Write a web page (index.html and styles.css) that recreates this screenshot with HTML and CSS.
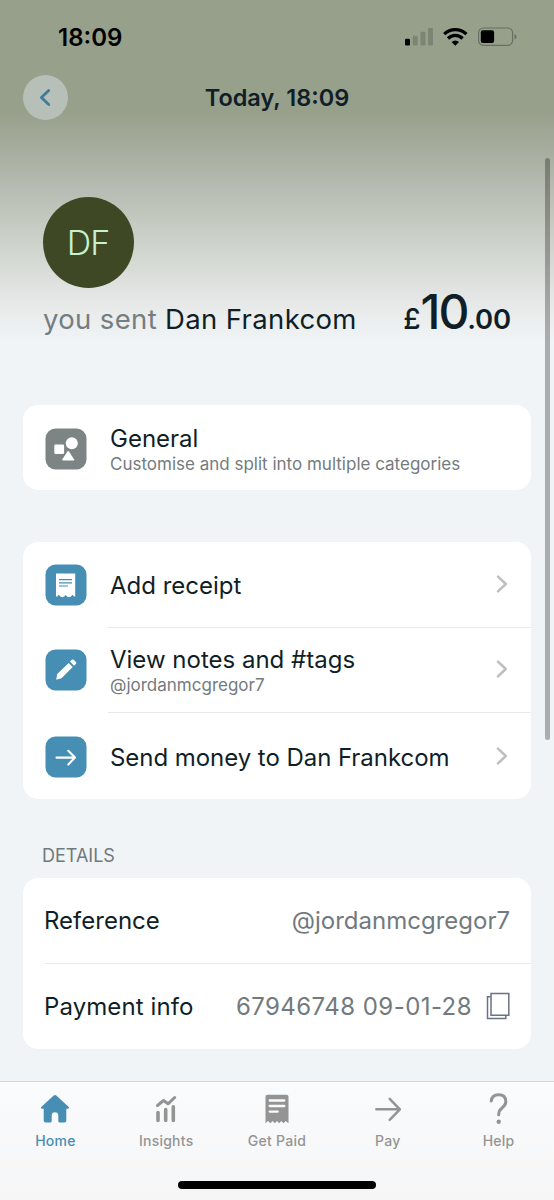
FILE: index.html
```html
<!DOCTYPE html>
<html lang="en">
<head>
<meta charset="utf-8">
<title>Transaction</title>
<link rel="stylesheet" href="styles.css">
</head>
<body>
<div class="screen">
  <header class="top">
    <div class="status">
      <span class="clock">18:09</span>
      <svg class="status-icons" width="114" height="20" viewBox="404 27 114 20">
        <rect x="405" y="38.700" width="5" height="6.800" rx="1.300" fill="#000"/>
        <g fill="#7c8473"><rect x="412.700" y="35.700" width="5" height="9.800" rx="1.300"/><rect x="420.500" y="31.800" width="5" height="13.700" rx="1.300"/><rect x="428" y="28" width="5" height="17.500" rx="1.300"/></g>
        <g fill="none" stroke="#000" stroke-width="3.200"><path d="M444.200 34.200a15.800 15.800 0 0 1 22.200 0"/><path d="M448 38.500a10.300 10.300 0 0 1 14.600 0"/></g>
        <path d="M451.600 42a5.300 5.300 0 0 1 7.400 0l-3.700 3.800z" fill="#000"/>
        <rect x="478.600" y="28" width="34" height="17.300" rx="4.800" fill="none" stroke="#697061" stroke-width="1.200"/>
        <rect x="480.800" y="30.200" width="13.300" height="12.900" rx="2" fill="#000"/>
        <path d="M514.600 34v5.400q2-.7 2-2.700t-2-2.700z" fill="#697061"/>
      </svg>
    </div>
    <div class="nav">
      <button class="back" aria-label="Back">
        <svg width="45" height="45" viewBox="0 0 45 45"><path d="M25.700 15.500l-7.300 7 7.300 7" fill="none" stroke="#3d7d98" stroke-width="2.800" stroke-linecap="round" stroke-linejoin="round"/></svg>
      </button>
      <h1 class="title">Today, 18:09</h1>
    </div>
  </header>

  <section class="hero">
    <div class="avatar">DF</div>
    <div class="summary">
      <div class="who"><span class="muted">you sent</span> <span class="name">Dan Frankcom</span></div>
      <div class="amount"><span class="cur">£</span><span class="pounds">10</span><span class="pence">.00</span></div>
    </div>
  </section>

  <section class="card category">
    <div class="row">
      <svg class="icon" width="42" height="42" viewBox="0 0 42 42"><rect x=".5" y=".5" width="41" height="41" rx="10" fill="#7c8584"/><g fill="#fff"><rect x="9.300" y="16.500" width="9.800" height="9.500" rx="1.200"/><circle cx="26.800" cy="15.300" r="6"/><path d="M22.400 23.600q.8-1.200 1.600 0l5 7.700q.6 1.200-.7 1.200h-10.200q-1.300 0-.7-1.200z"/></g></svg>
      <div class="text"><div class="label">General</div><div class="sub">Customise and split into multiple categories</div></div>
    </div>
  </section>

  <section class="card actions">
    <div class="row">
      <svg class="icon" width="42" height="42" viewBox="0 0 42 42"><rect x=".5" y=".5" width="41" height="41" rx="10" fill="#478eb4"/><path d="M11 9.500h19.200v23.300q-1.700-.2-2.700-2-1.400 2.400-3.700 2.400-2 0-3.200-2.100-1.200 2.100-3.200 2.100-2.300 0-3.700-2.400-1 1.800-2.700 2z" fill="#fff"/><path d="M14 15.700h13M14 18.800h13M14 22h9" stroke="#478eb4" stroke-width="1.200"/></svg>
      <div class="text"><div class="label">Add receipt</div></div>
      <svg class="chev" width="12" height="20" viewBox="0 0 12 20"><path d="M2 2.700l7.800 7.300L2 17.300" fill="none" stroke="#bcbec0" stroke-width="2.500" stroke-linecap="round" stroke-linejoin="round"/></svg>
    </div>
    <div class="row">
      <svg class="icon" width="42" height="42" viewBox="0 0 42 42"><rect x=".5" y=".5" width="41" height="41" rx="10" fill="#478eb4"/><path d="M11.200 30.800l1-5.700L23.700 14l4 4-11.200 11.300zM25 12.600l1.800-1.800q.9-.8 1.800 0l2.300 2.300q.9.900 0 1.800L29 16.700z" fill="#fff"/></svg>
      <div class="text"><div class="label">View notes and #tags</div><div class="sub">@jordanmcgregor7</div></div>
      <svg class="chev" width="12" height="20" viewBox="0 0 12 20"><path d="M2 2.700l7.800 7.300L2 17.300" fill="none" stroke="#bcbec0" stroke-width="2.500" stroke-linecap="round" stroke-linejoin="round"/></svg>
    </div>
    <div class="row row-send">
      <svg class="icon" width="42" height="42" viewBox="0 0 42 42"><rect x=".5" y=".5" width="41" height="41" rx="10" fill="#478eb4"/><path d="M11.500 21.600H29.500M23.300 14.800l6.700 6.800-6.700 6.800" fill="none" stroke="#fff" stroke-width="2.100" stroke-linecap="round" stroke-linejoin="round"/></svg>
      <div class="text"><div class="label send">Send money to Dan Frankcom</div></div>
      <svg class="chev" width="12" height="20" viewBox="0 0 12 20"><path d="M2 2.700l7.800 7.300L2 17.300" fill="none" stroke="#bcbec0" stroke-width="2.500" stroke-linecap="round" stroke-linejoin="round"/></svg>
    </div>
  </section>

  <h2 class="heading">DETAILS</h2>
  <section class="card details">
    <div class="pair"><span class="key">Reference</span><span class="value">@jordanmcgregor7</span></div>
    <div class="pair"><span class="key info">Payment info</span><span class="value account">67946748 09-01-28</span>
      <svg class="copy" width="24" height="28" viewBox="0 0 24 28"><g fill="none" stroke="#6b7286" stroke-width="1.500"><path d="M5 1.500h17.800v21.700H5z"/><path d="M4.700 4.800H1.500v21.700h18.300v-3"/></g></svg>
    </div>
  </section>

  <nav class="tabs">
    <div class="bar">
      <div class="tab active"><svg width="32" height="32" viewBox="0 0 32 32"><path d="M14.700 1.500q1.300-1 2.600 0L29.500 12.800q1.400 1.700-.6 2h-1.600v11.600q0 2-2 2h-4.800q-1.200 0-1.200-1.300v-5.400q0-3.400-3.300-3.400t-3.300 3.400v5.400q0 1.300-1.200 1.300H6.700q-2 0-2-2V14.800H3.100q-2-.3-.6-2z" fill="currentColor"/></svg><span>Home</span></div>
      <div class="tab"><svg width="32" height="32" viewBox="0 0 32 32"><path d="M8 18.500v8M15.700 15.500v11M23.300 12.700v13.800" stroke="currentColor" stroke-width="3.600" stroke-linecap="round"/><path d="M7.500 11.500l6-5 4.500 3.300 6.700-6.300" fill="none" stroke="currentColor" stroke-width="3" stroke-linecap="round" stroke-linejoin="round"/></svg><span>Insights</span></div>
      <div class="tab"><svg width="32" height="32" viewBox="0 0 32 32"><path d="M6.500 .7h19q2 0 2 2v26.600L24.800 27l-2.300 2.300-2.200-2.300-2.200 2.300L16 27l-2.200 2.300-2.200-2.300-2.300 2.300L7 27l-2.500 2.300V2.700q0-2 2-2z" fill="currentColor"/><path d="M8.700 6.500h14.600M8.700 12h14.600M8.700 17.600h8" stroke="#fafafb" stroke-width="2.300" stroke-linecap="round"/></svg><span>Get Paid</span></div>
      <div class="tab"><svg width="32" height="32" viewBox="0 0 32 32"><path d="M4.300 15.300H27.500M17.700 4.800l10.200 10.500-10.200 10.500" fill="none" stroke="currentColor" stroke-width="2.500" stroke-linecap="round" stroke-linejoin="round"/></svg><span>Pay</span></div>
      <div class="tab"><svg width="32" height="32" viewBox="0 0 32 32"><path d="M8.300 7Q8.800.700 15.600.700q7.200 0 7.200 6.700 0 3.400-3.500 6.300-3.600 2.600-3.600 7" fill="none" stroke="currentColor" stroke-width="3" stroke-linecap="round"/><circle cx="15.700" cy="27.700" r="2.200" fill="currentColor"/></svg><span>Help</span></div>
    </div>
    <div class="home-indicator"></div>
  </nav>
  <div class="scrollbar"></div>
</div>
</body>
</html>
```
FILE: styles.css
```css
* { box-sizing: border-box; margin: 0; padding: 0; }
body { font-family: Inter, "Liberation Sans", sans-serif; color: #101f27; background: #f0f4f6; }
.screen {
  position: relative; width: 554px; height: 1200px; overflow: hidden;
  display: flex; flex-direction: column;
  background: linear-gradient(#97a08b 0, #97a08b 112px, #a1a897 136px, #b3b9ad 180px, #c8cdc5 230px, #dbdfdb 276px, #e9ebeb 310px, #f0f4f6 342px);
}
svg { display: block; flex: none; overflow: visible; }
.status { height: 75px; padding: 0 36px 0 58px; display: flex; align-items: center; justify-content: space-between; }
.status-icons { margin-bottom: 1px; }
.clock { font-size: 24px; font-weight: 600; color: #000; line-height: 75px; }
.nav { height: 46px; padding: 0 23px; display: grid; grid-template-columns: 46px 1fr 46px; align-items: start; }
.back { width: 45px; height: 45px; border: 0; border-radius: 50%; background: #b7bfb9; }
.title { font-size: 23.500px; font-weight: 600; text-align: center; line-height: 46px; }
.hero { padding: 76px 43px 0; }
.avatar { width: 91px; height: 91px; border-radius: 50%; background: #3e4824; color: #c6f2d2; font-size: 34px; font-weight: 300; line-height: 92px; text-align: center; text-indent: -1px; letter-spacing: -1px; }
.summary { height: 117px; display: flex; justify-content: space-between; align-items: baseline; white-space: nowrap; line-height: 48px; }
.who { font-size: 27.500px; letter-spacing: .35px; }
.muted { color: #747e80; }
.amount { display: flex; align-items: baseline; font-weight: 500; }
.cur { font-size: 28px; }
.pounds { font-size: 48px; letter-spacing: -2.100px; }
.pence { font-size: 27.500px; font-weight: 600; letter-spacing: -.2px; }
.card { margin: 0 23px; background: #fff; border-radius: 15px; }
.category { height: 85px; flex: none; }
.category .row { height: 87px; }
.category .text { padding-top: 2px; }
.actions { height: 257px; margin-top: 52px; flex: none; }
.row { height: 85.500px; padding: 0 23px 0 22px; display: flex; align-items: center; }
.row-send { height: 87px; }
.text { margin-left: 23px; flex: 1; padding-top: 2px; white-space: nowrap; }
.actions .row:not(:last-child) { background: linear-gradient(#e5e9ee, #e5e9ee) 85px 100% / 423px 1px no-repeat; }
.label { font-size: 24px; line-height: 28px; }
.send { letter-spacing: -.05px; }
.sub { font-size: 17px; line-height: 22px; color: #747b7e; }
.chev { margin-bottom: 2px; }
.heading { margin: 46px 0 0 42px; font-size: 18px; line-height: 22px; font-weight: 400; color: #70797c; flex: none; }
.details { height: 171px; margin-top: 11px; flex: none; }
.pair { height: 85.500px; padding: 0 21px; display: flex; align-items: center; white-space: nowrap; font-size: 24px; }
.pair:first-child { background: linear-gradient(#e5e9ea, #e5e9ea) 22px 100% / 486px 1px no-repeat; }
.info { letter-spacing: .1px; }
.value { margin-left: auto; color: #727a7d; }
.account { letter-spacing: .45px; }
.copy { margin-left: 14px; }
.tabs { height: 120px; margin-top: 32px; flex: none; border-top: 1px solid #d3d7d8; background: linear-gradient(#fafbfc, #f6f6f7); }
.bar { height: 99px; display: grid; grid-template-columns: repeat(5, 1fr); padding-top: 12px; }
.tab { display: flex; flex-direction: column; align-items: center; color: #949494; font-size: 14px; font-weight: 500; line-height: 18px; letter-spacing: .25px; gap: 6px; }
.active { color: #478eb4; }
.home-indicator { width: 198px; height: 8px; margin: 0 auto; border-radius: 4px; background: #000; }
.scrollbar { position: absolute; left: 545px; top: 158px; width: 5px; height: 582px; border-radius: 3px; background: rgba(0, 0, 0, .29); }
```
